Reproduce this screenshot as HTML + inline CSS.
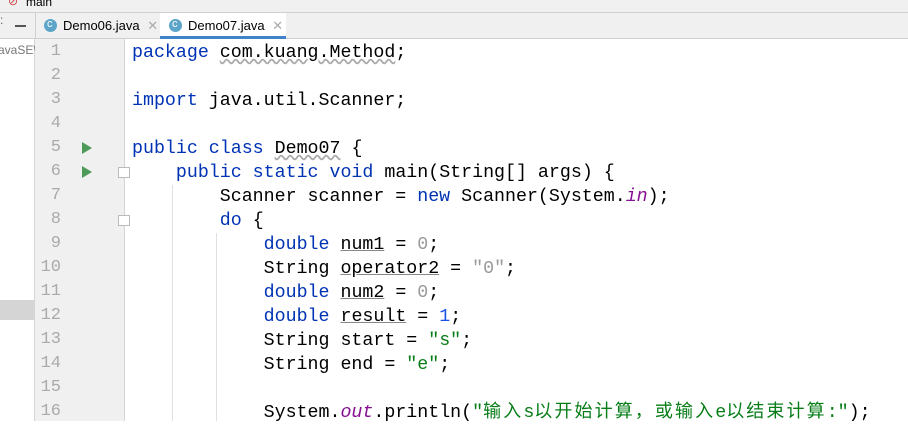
<!DOCTYPE html>
<html><head><meta charset="utf-8"><style>
html,body{margin:0;padding:0;width:908px;height:421px;overflow:hidden;background:#fff;font-family:"Liberation Sans",sans-serif;}
.top{position:absolute;left:0;top:0;width:908px;height:12px;background:#f0f0f0;border-bottom:1px solid #d0d0d0;}
.tabs{position:absolute;left:0;top:13px;width:908px;height:25px;background:#f0f0f0;border-bottom:1px solid #d0d0d0;}
.tab{position:absolute;top:0;height:25px;font-size:13px;line-height:25px;color:#000;}
.ic{position:absolute;top:6px;width:13px;height:13px;border-radius:50%;background:#5ca5c9;}
.ic:after{content:"c";position:absolute;left:3px;top:-7px;font-size:11px;color:#fff;}
.x{color:#aaa;font-size:13px;}
.left{position:absolute;left:0;top:39px;width:34px;height:382px;background:#fff;border-right:1px solid #d5d5d5;}
.gut{position:absolute;left:35px;top:39px;width:89px;height:382px;background:#f0f0f0;border-right:1px solid #d5d5d5;}
.ln{position:absolute;left:35px;width:26px;text-align:right;color:#aaa;font-family:"Liberation Mono",monospace;font-size:17px;height:24px;line-height:24px;}
.code{position:absolute;left:132px;top:41px;font-family:"Liberation Mono","Noto Sans CJK SC",monospace;font-size:18.3px;line-height:24px;white-space:pre;color:#000;}
.k{color:#0033b3}.s{color:#067d17}.n{color:#999}.nb{color:#1750eb}.f{color:#871094;font-style:italic}
.u{text-decoration:underline;text-decoration-color:#888}
.w{text-decoration:underline wavy #aaa;}
.cj{letter-spacing:2.1px;font-size:18px;}
.run{position:absolute;left:82px;width:0;height:0;border-left:10px solid #4e9a59;border-top:6px solid transparent;border-bottom:6px solid transparent;}
.fold{position:absolute;left:118px;width:10px;height:9px;border:1px solid #bbb;background:#fff;}
.guide{position:absolute;width:1px;background:#e0e0e0;}
</style></head><body>
<div class="top"><span style="position:absolute;left:8px;top:-6px;font-size:12px;color:#c44">⊘</span><span style="position:absolute;left:26px;top:-5px;font-size:12px">main</span></div>
<div class="tabs">
<span style="position:absolute;left:0;top:0;color:#666;font-size:12px">:</span>
<div style="position:absolute;left:15px;top:12px;width:11px;height:2px;background:#555"></div>
<div style="position:absolute;left:35px;top:0;width:1px;height:25px;background:#d0d0d0"></div>
<div class="tab" style="left:44px"><span class="ic" style="left:0"></span><span style="position:absolute;left:19px;white-space:nowrap">Demo06.java <span class="x" style="margin-left:4px">✕</span></span></div>
<div class="tab" style="left:160px;width:126px;background:#fff;border-bottom:3px solid #4083c9;height:23px"><span class="ic" style="left:9px"></span><span style="position:absolute;left:28px;white-space:nowrap;line-height:25px">Demo07.java <span class="x" style="margin-left:4px">✕</span></span></div>
</div>
<div class="left"><span style="position:absolute;left:-2px;top:4px;font-size:12px;color:#777">avaSE\</span><div style="position:absolute;left:0;top:261px;width:34px;height:20px;background:#d5d5d5"></div></div>
<div class="gut"></div>
<div class="ln" style="top:40px">1</div><div class="ln" style="top:64px">2</div><div class="ln" style="top:88px">3</div><div class="ln" style="top:112px">4</div><div class="ln" style="top:136px">5</div><div class="ln" style="top:160px">6</div><div class="ln" style="top:184px">7</div><div class="ln" style="top:208px">8</div><div class="ln" style="top:232px">9</div><div class="ln" style="top:256px">10</div><div class="ln" style="top:280px">11</div><div class="ln" style="top:304px">12</div><div class="ln" style="top:328px">13</div><div class="ln" style="top:352px">14</div><div class="ln" style="top:376px">15</div><div class="ln" style="top:400px">16</div>
<div class="run" style="top:142px"></div><div class="run" style="top:166px"></div>
<div class="fold" style="top:167px"></div><div class="fold" style="top:215px"></div>
<div class="guide" style="left:172px;top:185px;height:236px"></div>
<div class="guide" style="left:216px;top:233px;height:188px"></div>
<div class="code"><span class="k">package</span> <span class="w">com.kuang.Method</span>;

<span class="k">import</span> java.util.Scanner;

<span class="k">public class</span> <span class="w">Demo07</span> {
    <span class="k">public static void</span> main(String[] args) {
        Scanner scanner = <span class="k">new</span> Scanner(System.<span class="f">in</span>);
        <span class="k">do</span> {
            <span class="k">double</span> <span class="u">num1</span> = <span class="n">0</span>;
            String <span class="u">operator2</span> = <span class="n">"0"</span>;
            <span class="k">double</span> <span class="u">num2</span> = <span class="n">0</span>;
            <span class="k">double</span> <span class="u">result</span> = <span class="nb">1</span>;
            String start = <span class="s">"s"</span>;
            String end = <span class="s">"e"</span>;

            System.<span class="f">out</span>.println(<span class="s">"<span class="cj">输入</span>s<span class="cj">以开始计算，或输入</span>e<span class="cj">以结束计算</span>:"</span>);
</div>
</body></html>
